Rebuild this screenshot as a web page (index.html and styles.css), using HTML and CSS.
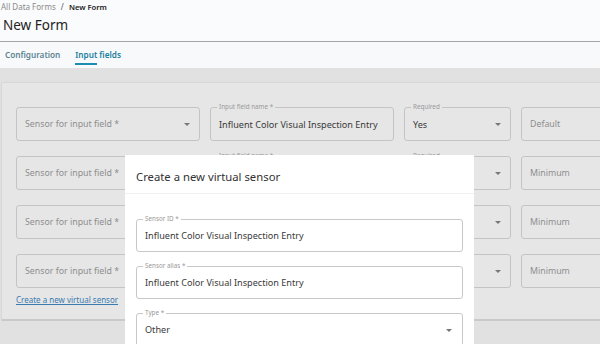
FILE: index.html
```html
<!DOCTYPE html>
<html lang="en">
<head>
  <meta charset="UTF-8" />
  <title>New Form</title>
  <link rel="stylesheet" href="styles.css">
</head>
<body>
  <div class="page-header">
    <div class="breadcrumb">
      <span class="crumb">All Data Forms</span>
      <span class="sep">/</span>
      <span class="current">New Form</span>
    </div>
    <h1>New Form</h1>
  </div>

  <div class="tabs">
    <span class="tab">Configuration</span>
    <span class="tab active">Input fields</span>
  </div>

  <div class="content">
    <div class="card">
      <div class="row">
        <div class="field select"><span class="placeholder">Sensor for input field *</span><span class="arrow"></span></div>
        <div class="field"><label>Input field name *</label><span class="value">Influent Color Visual Inspection Entry</span></div>
        <div class="field select"><label>Required</label><span class="value">Yes</span><span class="arrow"></span></div>
        <div class="field"><span class="placeholder">Default</span></div>
      </div>
      <div class="row">
        <div class="field select"><span class="placeholder">Sensor for input field *</span><span class="arrow"></span></div>
        <div class="field"><label>Input field name *</label><span class="value">Influent Color Visual Inspection Entry</span></div>
        <div class="field select"><label>Required</label><span class="value">Yes</span><span class="arrow"></span></div>
        <div class="field"><span class="placeholder">Minimum</span></div>
      </div>
      <div class="row">
        <div class="field select"><span class="placeholder">Sensor for input field *</span><span class="arrow"></span></div>
        <div class="field"><label>Input field name *</label><span class="value">Influent Color Visual Inspection Entry</span></div>
        <div class="field select"><label>Required</label><span class="value">Yes</span><span class="arrow"></span></div>
        <div class="field"><span class="placeholder">Minimum</span></div>
      </div>
      <div class="row">
        <div class="field select"><span class="placeholder">Sensor for input field *</span><span class="arrow"></span></div>
        <div class="field"><label>Input field name *</label><span class="value">Influent Color Visual Inspection Entry</span></div>
        <div class="field select"><label>Required</label><span class="value">Yes</span><span class="arrow"></span></div>
        <div class="field"><span class="placeholder">Minimum</span></div>
      </div>
      <a class="link" href="#">Create a new virtual sensor</a>
    </div>
  </div>

  <div class="modal">
    <div class="modal-header">Create a new virtual sensor</div>
    <div class="modal-body">
      <div class="field"><label>Sensor ID *</label><span class="value">Influent Color Visual Inspection Entry</span></div>
      <div class="field"><label>Sensor alias *</label><span class="value">Influent Color Visual Inspection Entry</span></div>
      <div class="field select"><label>Type *</label><span class="value">Other</span><span class="arrow"></span></div>
    </div>
  </div>
</body>
</html>
```

FILE: styles.css
```css
* {
  box-sizing: border-box;
}

body {
  margin: 0;
  width: 600px;
  height: 344px;
  overflow: hidden;
  font-family: 'Noto Sans', 'Open Sans', sans-serif;
  background: #e1e1e1;
  position: relative;
}

.page-header {
  background: #fafbfc;
  padding: 1px 0 0 1px;
  height: 42px;
  border-bottom: 1px solid #a5a5a5;
}

.breadcrumb {
  font-size: 8px;
  line-height: 12px;
  color: #8a8a8a;
}

.breadcrumb .sep {
  margin: 0 3px;
  color: #555;
}

.breadcrumb .current {
  color: #222;
  font-weight: 600;
  font-size: 7.6px;
}

h1 {
  margin: 3px 0 0 2px;
  font-size: 13.5px;
  font-weight: 400;
  color: #222;
  line-height: 18px;
}

.tabs {
  background: #f8f9fa;
  height: 26px;
  display: flex;
  gap: 15px;
  padding: 6px 0 0 5px;
}

.tab {
  position: relative;
  font-size: 8.2px;
  font-weight: 600;
  color: #5b8493;
  height: 17px;
  line-height: 13px;
}

.tab.active {
  color: #22809f;
}

.tab.active::after {
  content: "";
  position: absolute;
  left: 0;
  bottom: 0;
  width: 22px;
  height: 2px;
  background: #1a8db3;
}

.content {
  padding: 15px 0 0 2px;
  overflow: hidden;
}

.card {
  width: 640px;
  background: #e6e6e6;
  border-bottom: 2px solid #c9c9c9;
  padding: 24px 0 13px 14px;
  box-shadow: 0 0 2px rgba(0, 0, 0, 0.12);
}

.row {
  display: grid;
  grid-template-columns: 184px 184px 107px 120px;
  gap: 10px;
  margin-bottom: 15px;
}

.field {
  position: relative;
  height: 34px;
  border: 1px solid #c4c4c4;
  border-radius: 3px;
  display: flex;
  align-items: center;
  padding: 0 8px;
  font-size: 9.1px;
  color: #3a3a3a;
}

.field label {
  position: absolute;
  top: -6px;
  left: 6px;
  font-size: 6.3px;
  line-height: 10px;
  padding: 0 2px;
  color: #999;
  background: #e6e6e6;
}

.placeholder {
  color: #8e8e8e;
  font-size: 8.8px;
}

.value {
  white-space: nowrap;
}

.arrow {
  position: absolute;
  right: 9px;
  top: 15px;
  border-left: 3px solid transparent;
  border-right: 3px solid transparent;
  border-top: 3px solid #777;
}

.link {
  display: block;
  width: max-content;
  margin-top: -9px;
  font-size: 8px;
  line-height: 12px;
  color: #3a7bb0;
  text-decoration: underline;
}

.modal {
  position: absolute;
  left: 125px;
  top: 155px;
  width: 349px;
  height: 200px;
  background: #fff;
}

.modal-header {
  height: 39px;
  border-bottom: 1px solid #f0f0f0;
  padding: 14px 0 0 11px;
  font-size: 11.3px;
  color: #333;
}

.modal-body {
  padding: 25px 11px 0 11px;
  display: flex;
  flex-direction: column;
  gap: 14px;
}

.modal-body .field {
  height: 33px;
  border-color: #c8c8c8;
}

.modal-body .field label {
  background: #fff;
}

.modal-body .arrow {
  right: 10px;
}
```
